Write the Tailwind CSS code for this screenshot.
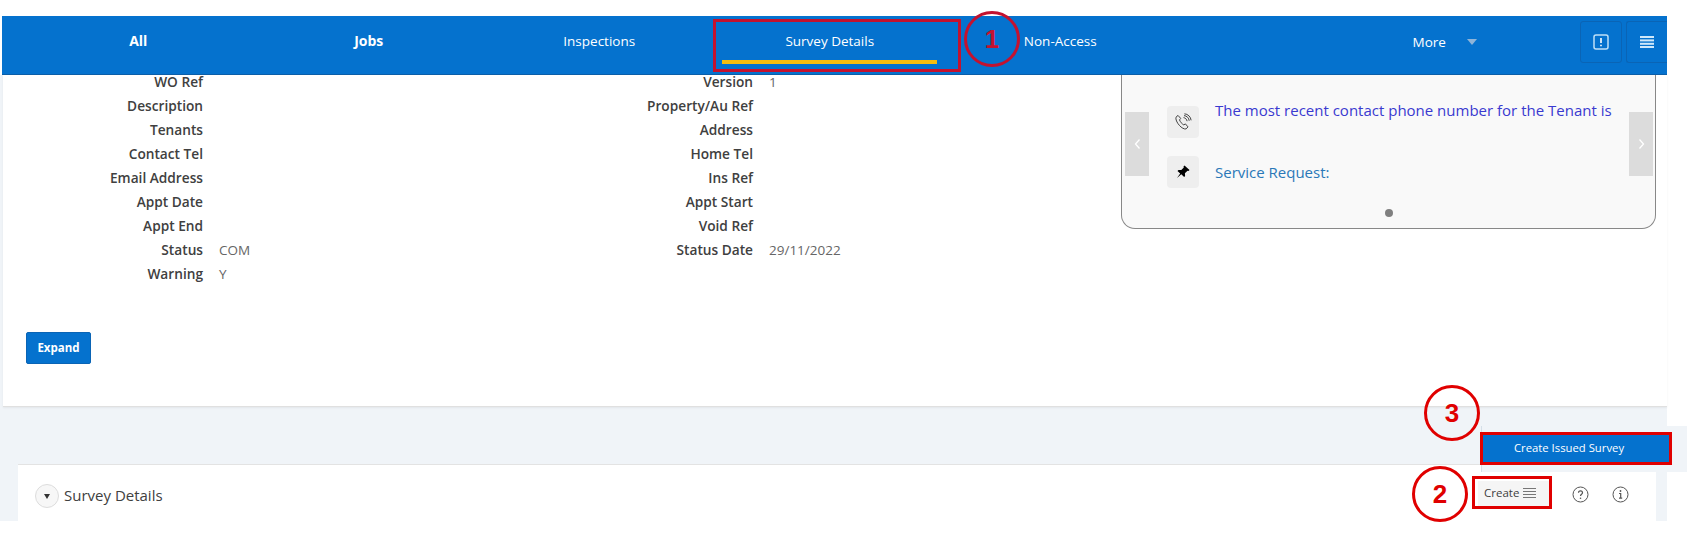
<!DOCTYPE html>
<html lang="en">
<head>
  <meta charset="UTF-8">
  <title>Survey Details</title>
  <script src="https://cdn.jsdelivr.net/npm/@tailwindcss/browser@4"></script>
</head>
<body class="bg-white font-['Open_Sans',sans-serif]">
  <div class="relative w-[1699px] h-[534px] overflow-hidden pt-4">

    <!-- tab bar -->
    <nav class="relative z-10 ml-[2px] w-[1665px] h-[59px] bg-[#0572ce] border-b border-[#0b5ea8] flex items-start text-white text-[13.5px]">
      <div class="ml-[21px] flex">
        <a class="w-[230.5px] h-[49px] flex items-center justify-center font-bold text-[14px]">All</a>
        <a class="w-[230.5px] h-[49px] flex items-center justify-center font-bold text-[14px]">Jobs</a>
        <a class="w-[230.5px] h-[50px] flex items-center justify-center">Inspections</a>
        <a class="w-[230.5px] h-[50px] flex items-center justify-center">Survey Details</a>
        <a class="w-[230.5px] h-[50px] flex items-center justify-center">Non-Access</a>
      </div>
      <div class="ml-[237px] h-[50px] flex items-center gap-[21px] pt-[2px]">
        <span>More</span>
        <span class="w-0 h-0 border-x-[5px] border-x-transparent border-t-[6px] border-t-[#8fb4d8]"></span>
      </div>
      <div class="ml-auto mt-[5px] flex gap-[4px]">
        <button class="w-[42px] h-[42px] rounded-[3px] border border-[#0a64b5] flex items-center justify-center">
          <svg width="16" height="16" viewBox="0 0 16 16" fill="none"><rect x="1" y="1" width="14" height="14" rx="2" stroke="#bfe0f7" stroke-width="1.5"/><path d="M8 4v5" stroke="#fff" stroke-width="1.6"/><path d="M8 10.7v1.6" stroke="#fff" stroke-width="1.6"/></svg>
        </button>
        <button class="w-[41px] h-[42px] rounded-l-[3px] border border-r-0 border-[#0a64b5] flex items-center justify-center">
          <svg width="14" height="12" viewBox="0 0 14 12" fill="#cfe8fa"><rect y="0" width="14" height="2"/><rect y="3.4" width="14" height="2"/><rect y="6.8" width="14" height="2"/><rect y="10" width="14" height="2"/></svg>
        </button>
      </div>
    </nav>

    <!-- yellow underline and red box on the active tab -->
    <div class="absolute z-20 left-[722px] top-[60px] w-[215px] h-[4px] bg-[#f6bd0f]"></div>
    <div class="absolute z-20 left-[713px] top-[19px] w-[248px] h-[53px] border-[3px] border-[#c4122f]"></div>

    <div class="bg-[#f0f4f8] w-[1667px] h-[446px] pl-[3px] flow-root">
      <!-- job details card -->
      <div class="relative h-[332px] bg-white border-b border-[#e0e0e0] shadow-[0_1px_2px_rgba(0,0,0,0.06)] flow-root">
        <div class="-mt-[5px] grid grid-cols-[200px_318px_200px_1fr] gap-x-4 auto-rows-[24px] items-center text-[13.5px] text-[#666]">
          <b class="text-right font-semibold text-[13.7px] text-[#404040]">WO Ref</b><span></span><b class="text-right font-semibold text-[13.7px] text-[#404040]">Version</b><span>1</span>
          <b class="text-right font-semibold text-[13.7px] text-[#404040]">Description</b><span></span><b class="text-right font-semibold text-[13.7px] text-[#404040]">Property/Au Ref</b><span></span>
          <b class="text-right font-semibold text-[13.7px] text-[#404040]">Tenants</b><span></span><b class="text-right font-semibold text-[13.7px] text-[#404040]">Address</b><span></span>
          <b class="text-right font-semibold text-[13.7px] text-[#404040]">Contact Tel</b><span></span><b class="text-right font-semibold text-[13.7px] text-[#404040]">Home Tel</b><span></span>
          <b class="text-right font-semibold text-[13.7px] text-[#404040]">Email Address</b><span></span><b class="text-right font-semibold text-[13.7px] text-[#404040]">Ins Ref</b><span></span>
          <b class="text-right font-semibold text-[13.7px] text-[#404040]">Appt Date</b><span></span><b class="text-right font-semibold text-[13.7px] text-[#404040]">Appt Start</b><span></span>
          <b class="text-right font-semibold text-[13.7px] text-[#404040]">Appt End</b><span></span><b class="text-right font-semibold text-[13.7px] text-[#404040]">Void Ref</b><span></span>
          <b class="text-right font-semibold text-[13.7px] text-[#404040]">Status</b><span>COM</span><b class="text-right font-semibold text-[13.7px] text-[#404040]">Status Date</b><span>29/11/2022</span>
          <b class="text-right font-semibold text-[13.7px] text-[#404040]">Warning</b><span>Y</span><span></span><span></span>
        </div>
        <button class="ml-[23px] mt-[46px] w-[65px] h-[32px] bg-[#0572ce] rounded-[2px] border border-[#0a64b5] text-white text-[11.5px] font-bold">Expand</button>

        <!-- carousel -->
        <div class="absolute left-[1118px] top-0 w-[535px] h-[154px] bg-[#f9f9f9] border border-t-0 border-[#888] rounded-b-[14px]">
          <div class="absolute left-[3px] top-[37px] w-[24px] h-[64px] bg-[#dcdcdc] flex items-center justify-center">
            <svg width="7" height="12" viewBox="0 0 7 12" fill="none"><path d="M5.5 1.5 1.5 6l4 4.5" stroke="#fff" stroke-width="1.3"/></svg>
          </div>
          <div class="absolute right-[2px] top-[37px] w-[24px] h-[64px] bg-[#dcdcdc] flex items-center justify-center">
            <svg width="7" height="12" viewBox="0 0 7 12" fill="none"><path d="M1.5 1.5 5.5 6l-4 4.5" stroke="#fff" stroke-width="1.3"/></svg>
          </div>
          <div class="pl-[45px] pt-[31px]">
            <div class="flex items-start gap-[16px] h-[50px]">
              <span class="w-[32px] h-[32px] rounded-[4px] bg-[#eeeeee] flex items-center justify-center">
                <svg width="18" height="18" viewBox="0 0 18 18" fill="none" stroke="#444" stroke-width="1"><path d="M2 4.2 4 2.4l2.700 3-1.200 1.500c.6 1.800 2.500 4.100 4.300 5l1.600-1 2.600 3-1.900 2c-1.600.6-4.600-1-6.800-3.600C3 9.800 1.300 6 2 4.200Z"/><path d="M9.500 4.600c1.800.2 3.300 1.700 3.600 3.600"/><path d="M10 2.600c2.800.2 5 2.400 5.200 5.200"/><path d="M10.400.800c3.500.2 6.400 3 6.700 6.500"/></svg>
              </span>
              <span class="-mt-[8px] text-[15px] leading-[24px] text-[#3a3ad0] whitespace-nowrap">The most recent contact phone number for the Tenant is</span>
            </div>
            <div class="flex items-center gap-[16px]">
              <span class="w-[32px] h-[32px] rounded-[4px] bg-[#eeeeee] flex items-center justify-center">
                <svg width="14" height="14" viewBox="0 0 14 14" fill="#000"><path d="M8.500.500 13.500 5l-1 1-1-.3-2.600 2.500.2 2.800-1 1-2.800-2.800L1 13l3.200-4.400L1.500 6l1-1 2.800.1L7.800 2.500 7.500 1.500Z"/></svg>
              </span>
              <span class="text-[15px] text-[#2a78b8]">Service Request:</span>
            </div>
          </div>
          <div class="absolute left-[263px] top-[134px] w-2 h-2 rounded-full bg-[#808080]"></div>
        </div>
      </div>

      <!-- survey details panel -->
      <div class="ml-[15px] mt-[57px] w-[1638px] h-[57px] bg-white border-t border-[#e3e3e3] flex items-center">
        <span class="ml-[17px] mt-[6px] w-6 h-6 rounded-full border border-[#ddd] bg-[#f7f7f7] flex items-center justify-center">
          <span class="w-0 h-0 border-x-[3.5px] border-x-transparent border-t-[5px] border-t-[#333]"></span>
        </span>
        <span class="ml-[5px] mt-[4px] text-[15px] text-[#404040]">Survey Details</span>
        <div class="ml-auto mr-[27px] mt-[2px] flex items-center">
          <span class="w-[74px] h-[27px] pl-[6px] pb-[2px] bg-[#f5f5f5] flex items-center gap-[4px] text-[11.500px] text-[#404040]">
            Create
            <svg width="13" height="12" viewBox="0 0 13 12" stroke="#777" stroke-width="1"><path d="M0 1.500h13M0 4.500h13M0 7.500h13M0 10.500h13"/></svg>
          </span>
          <svg class="ml-[20px]" width="17" height="17" viewBox="0 0 17 17" fill="none"><circle cx="8.500" cy="8.500" r="7.500" stroke="#555"/><path d="M6.500 6.800c0-2.600 4-2.600 4 0 0 1.500-2 1.500-2 3.200" stroke="#555" stroke-width="1.200"/><circle cx="8.500" cy="12.300" r=".8" fill="#555"/></svg>
          <svg class="ml-[23px]" width="17" height="17" viewBox="0 0 17 17" fill="none"><circle cx="8.500" cy="8.500" r="7.500" stroke="#555"/><path d="M7 7.500h1.700v4.500M7 12.200h3.200" stroke="#555" stroke-width="1.200"/><circle cx="8.500" cy="5" r=".9" fill="#555"/></svg>
        </div>
      </div>
    </div>

    <!-- floating create button -->
    <div class="absolute z-20 left-[1481px] top-[426px] w-[206px] h-[46px] bg-[#f0f4f8] border-l border-[#d5dfe8]">
      <button class="absolute left-[1px] top-[9px] w-[186px] h-[27px] pr-[14px] bg-[#0572ce] text-white text-[11.3px] outline-[3px] outline-[#e00000]">Create Issued Survey</button>
    </div>
    <div class="absolute z-30 left-[1472px] top-[476px] w-[80px] h-[33px] border-[3px] border-[#e00000]"></div>

    <!-- numbered callouts -->
    <div class="absolute z-30 left-[964px] top-[11px] w-[56px] h-[56px] rounded-full border-[3px] border-[#c4122f] flex items-center justify-center font-['Liberation_Sans',sans-serif] font-bold text-[26px] text-[#c4122f]">1</div>
    <div class="absolute z-30 left-[1412px] top-[466px] w-[56px] h-[56px] rounded-full border-[3px] border-[#e00000] flex items-center justify-center font-['Liberation_Sans',sans-serif] font-bold text-[26px] text-[#e00000]">2</div>
    <div class="absolute z-30 left-[1424px] top-[385px] w-[56px] h-[56px] rounded-full border-[3px] border-[#e00000] flex items-center justify-center font-['Liberation_Sans',sans-serif] font-bold text-[26px] text-[#e00000]">3</div>
  </div>
</body>
</html>
